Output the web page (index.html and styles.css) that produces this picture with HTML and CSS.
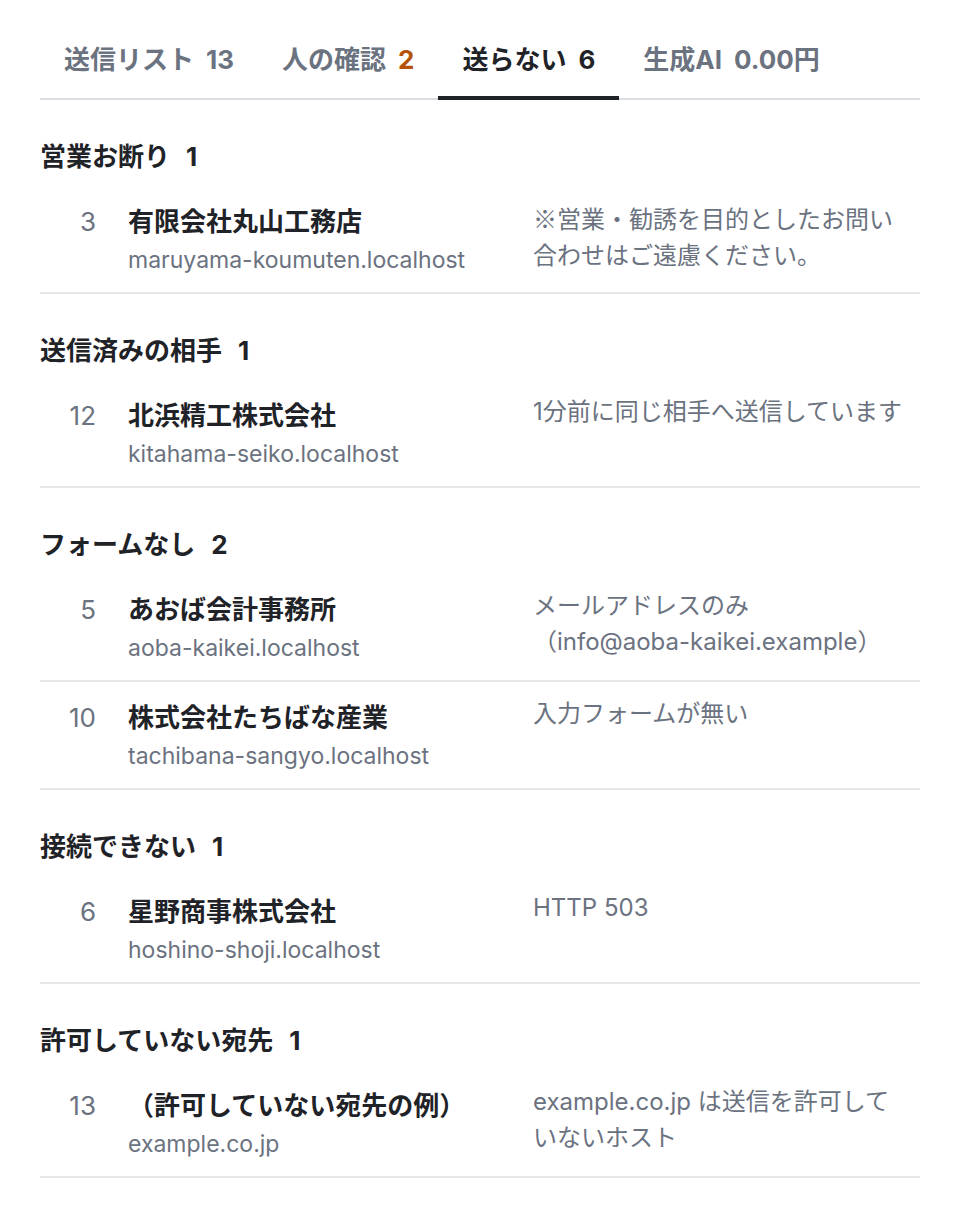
FILE: index.html
```html
<!DOCTYPE html>
<html lang="ja">
<head>
<meta charset="utf-8">
<title>送らない</title>
<link rel="stylesheet" href="styles.css">
</head>
<body>
<div class="page">
  <nav class="tabs">
    <div class="tab">送信リスト<span class="count">13</span></div>
    <div class="tab">人の確認<span class="count warn">2</span></div>
    <div class="tab active">送らない<span class="count">6</span></div>
    <div class="tab">生成AI<span class="count">0.00円</span></div>
  </nav>

  <section class="group">
    <h2 class="group-title">営業お断り<span class="group-count">1</span></h2>
    <div class="row">
      <div class="num">3</div>
      <div class="who"><div class="name">有限会社丸山工務店</div><div class="domain">maruyama-koumuten.localhost</div></div>
      <div class="reason"><span class="cjk">※</span>営業・勧誘を目的としたお問い合わせはご遠慮ください。</div>
    </div>
  </section>

  <section class="group">
    <h2 class="group-title">送信済みの相手<span class="group-count">1</span></h2>
    <div class="row">
      <div class="num">12</div>
      <div class="who"><div class="name">北浜精工株式会社</div><div class="domain">kitahama-seiko.localhost</div></div>
      <div class="reason">1分前に同じ相手へ送信しています</div>
    </div>
  </section>

  <section class="group">
    <h2 class="group-title">フォームなし<span class="group-count">2</span></h2>
    <div class="row">
      <div class="num">5</div>
      <div class="who"><div class="name">あおば会計事務所</div><div class="domain">aoba-kaikei.localhost</div></div>
      <div class="reason">メールアドレスのみ<span class="nowrap">（info@aoba-kaikei.example）</span></div>
    </div>
    <div class="row">
      <div class="num">10</div>
      <div class="who"><div class="name">株式会社たちばな産業</div><div class="domain">tachibana-sangyo.localhost</div></div>
      <div class="reason">入力フォームが無い</div>
    </div>
  </section>

  <section class="group">
    <h2 class="group-title">接続できない<span class="group-count">1</span></h2>
    <div class="row">
      <div class="num">6</div>
      <div class="who"><div class="name">星野商事株式会社</div><div class="domain">hoshino-shoji.localhost</div></div>
      <div class="reason">HTTP 503</div>
    </div>
  </section>

  <section class="group">
    <h2 class="group-title">許可していない宛先<span class="group-count">1</span></h2>
    <div class="row">
      <div class="num">13</div>
      <div class="who"><div class="name">（許可していない宛先の例）</div><div class="domain">example.co.jp</div></div>
      <div class="reason">example.co.jp は送信を許可していないホスト</div>
    </div>
  </section>
</div>
</body>
</html>
```
FILE: styles.css
```css
* { box-sizing: border-box; }
html, body { margin: 0; padding: 0; background: #ffffff; }
body {
  font-family: "Inter", "Noto Sans CJK JP", sans-serif;
  color: #1f2328;
}
.page { padding: 20px 40px 0; }

.tabs {
  display: flex;
  border-bottom: 2px solid #d9dce1;
}
.tab {
  padding: 22px 24px 18px;
  line-height: 36px;
  font-size: 26px;
  font-weight: 700;
  color: #6b7280;
  margin-bottom: -2px;
  border-bottom: 4px solid transparent;
}
.tab.active {
  color: #1f2328;
  border-bottom-color: #1f2328;
}
.count { margin-left: 12px; }
.count.warn { color: #b45309; }

.group { padding-top: 39px; }
.group-title {
  margin: 0 0 11px;
  font-size: 26px;
  line-height: 36px;
  font-weight: 700;
  color: #1f2328;
}
.group-count { margin-left: 16px; }

.row {
  display: grid;
  grid-template-columns: 56px 1fr 378px;
  column-gap: 32px;
  padding: 18px 9px 14px 0;
  border-bottom: 2px solid #e5e7eb;
}
.num {
  text-align: right;
  font-size: 26px;
  line-height: 36px;
  color: #6b7280;
}
.name {
  font-size: 26px;
  line-height: 36px;
  font-weight: 700;
  color: #1f2328;
}
.domain {
  margin-top: 2px;
  font-size: 23px;
  line-height: 36px;
  color: #6b7280;
}
.reason {
  margin-top: -4px;
  font-size: 24px;
  line-height: 36px;
  color: #6b7280;
}
.cjk { font-family: "Noto Sans CJK JP", sans-serif; }
.nowrap { white-space: nowrap; }
```
